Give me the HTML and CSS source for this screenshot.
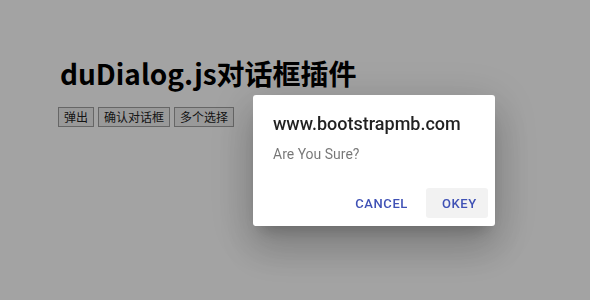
FILE: index.html
```html
<!DOCTYPE html>
<html lang="zh-CN">
<head>
    <meta charset="utf-8">
    <title>duDialog.js对话框插件</title>
    <link rel="stylesheet" href="styles.css">
</head>
<body>
    <div class="demo">
        <h1>duDialog.js对话框插件</h1>
        <div class="knapper">
            <button>弹出</button>
            <button>确认对话框</button>
            <button>多个选择</button>
        </div>
    </div>

    <div class="overlay">
        <div class="dialog">
            <h2>www.bootstrapmb.com</h2>
            <p>Are You Sure?</p>
            <div class="actions">
                <button class="cancel">CANCEL</button>
                <button class="okey">OKEY</button>
            </div>
        </div>
    </div>
</body>
</html>
```

FILE: styles.css
```css
* {
    box-sizing: border-box;
    margin: 0;
    padding: 0;
}

body {
    background: #fff;
    font-family: "Noto Sans CJK SC", "Noto Sans", sans-serif;
}

.demo {
    padding: 52px 0 0 58px;
}

h1 {
    font-size: 28px;
    font-weight: bold;
    line-height: 42px;
    margin-left: 2px;
    color: #000;
}

.knapper {
    margin-top: 13px;
    display: flex;
    gap: 4px;
}

.knapper button {
    font-family: "Noto Sans CJK SC", sans-serif;
    font-size: 12px;
    line-height: 18px;
    height: 20px;
    padding: 0 5px;
    border: 1px solid #a0a0a0;
    background: #f0f0f0;
    color: #222;
    border-radius: 0;
}

.overlay {
    position: fixed;
    top: 0;
    left: 0;
    right: 0;
    bottom: 0;
    background: rgba(0, 0, 0, 0.36);
}

.dialog {
    position: absolute;
    left: 253px;
    top: 95px;
    width: 242px;
    height: 131px;
    background: #fff;
    border-radius: 3px;
    box-shadow: 0 11px 15px -7px rgba(0,0,0,0.2), 0 24px 38px 3px rgba(0,0,0,0.14), 0 9px 46px 8px rgba(0,0,0,0.12);
    font-family: Roboto, sans-serif;
    padding: 17px 7px 8px 20px;
}

.dialog h2 {
    font-size: 18px;
    font-weight: 500;
    line-height: 24px;
    color: rgba(0,0,0,0.87);
}

.dialog p {
    margin-top: 8px;
    font-size: 14px;
    line-height: 20px;
    color: rgba(0,0,0,0.54);
}

.actions {
    margin-top: 24px;
    display: flex;
    justify-content: flex-end;
    gap: 2px;
}

.actions button {
    font-family: Roboto, sans-serif;
    font-size: 13px;
    font-weight: 500;
    letter-spacing: 0.6px;
    color: #3f51b5;
    background: none;
    border: none;
    border-radius: 3px;
    height: 30px;
    padding: 0 16px;
}

.actions .okey {
    background: #f2f2f2;
    width: 62px;
}
```
